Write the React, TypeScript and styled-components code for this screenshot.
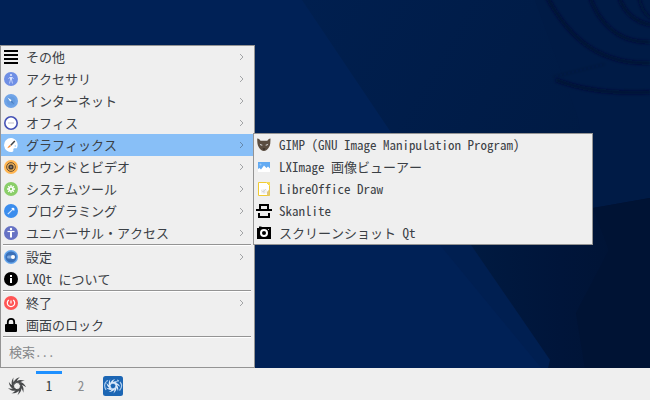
import React from 'react';
import styled, { createGlobalStyle, css } from 'styled-components';

const GlobalStyle = createGlobalStyle`
  *, *::before, *::after { box-sizing: border-box; }
  body {
    margin: 0;
    background: #002156;
    color: #3b4045;
    font: 13px/22px 'Noto Sans Mono CJK JP', 'Noto Sans CJK JP', monospace;
  }
  button, input { font: inherit; color: inherit; }
`;

const Desktop = styled.div`
  position: relative;
  display: flex;
  flex-direction: column;
  min-height: 100vh;
  overflow: hidden;
`;

const Backdrop = styled.svg`
  position: absolute;
  inset: 0;
  width: 100%;
  height: 100%;
`;

const Workspace = styled.main`
  position: relative;
  flex: 1;
  display: flex;
  align-items: flex-end;
`;

const menuFrame = css`
  background: #efefef;
  border: 1px solid #949494;
`;

const MainMenu = styled.nav`
  ${menuFrame}
  width: 255px;
`;

const MenuList = styled.ul`
  list-style: none;
  margin: 0;
  padding: 0;
`;

const Entry = styled.li`
  position: relative;
`;

const EntryButton = styled.button<{ $active?: boolean }>`
  display: flex;
  align-items: center;
  gap: 7px;
  width: 100%;
  height: 22px;
  padding: 0 10px 0 2px;
  border: 0;
  background: ${p => (p.$active ? '#88bff7' : 'transparent')};
  text-align: left;
  white-space: nowrap;
`;

const EntryLabel = styled.span`
  flex: 1;
`;

const Icon = styled.svg<{ $size?: number }>`
  flex: none;
  display: block;
  width: ${p => p.$size ?? 16}px;
  height: ${p => p.$size ?? 16}px;
`;

const Arrow = styled.svg`
  flex: none;
  width: 5px;
  height: 8px;
  fill: none;
  stroke: #31363b;
  stroke-opacity: 0.4;
`;

const Submenu = styled.ul`
  ${menuFrame}
  position: absolute;
  top: -1px;
  left: calc(100% - 1px);
  z-index: 1;
  min-width: 340px;
  margin: 0;
  padding: 0;
  list-style: none;
`;

const Separator = styled.li`
  height: 2px;
  margin: 0 3px 0 2px;
  border-top: 1px solid #949494;
  border-bottom: 1px solid #ffffff;
`;

const SearchBox = styled.input`
  display: block;
  width: 100%;
  height: 29px;
  padding: 0 8px 2px;
  border: 0;
  outline: 0;
  background: transparent;
  &::placeholder { color: #858789; opacity: 1; }
`;

const Taskbar = styled.footer`
  position: relative;
  display: flex;
  align-items: center;
  gap: 6px;
  height: 32px;
  padding-left: 4px;
  background: #efefef;
`;

const PanelButton = styled.button<{ $current?: boolean; $dim?: boolean }>`
  display: flex;
  align-items: center;
  justify-content: center;
  width: 26px;
  height: 26px;
  padding: 0;
  border: 0;
  background: transparent;
  color: ${p => (p.$dim ? '#8a8c8e' : '#31363b')};
  box-shadow: ${p => (p.$current ? 'inset 0 3px #1e90ff' : 'none')};
`;

const Pager = styled.div`
  display: flex;
  gap: 6px;
  line-height: 26px;
  ${PanelButton} { padding-top: 3px; }
`;

const IconButton = styled(PanelButton)`
  padding-top: 4px;
`;

const glyphs = {
  other: <path d="M1 2h14M1 6h14M1 10h14M1 14h14" stroke="#000" strokeWidth="2" />,
  accessories: (
    <>
      <circle cx="8" cy="8" r="7" fill="#6f8fe5" />
      <circle cx="8" cy="4" r="1.1" fill="#dbe4ff" />
      <path d="M7 6h2v3H7z" fill="#dbe4ff" />
      <path d="M5.5 8 7 6M10.5 8 9 6M6.5 12.5l1-4M9.5 12.5l-1-4" fill="none" stroke="#c3d1fa" />
    </>
  ),
  internet: (
    <>
      <circle cx="8" cy="8" r="7" fill="#70a4e8" />
      <circle cx="8" cy="8" r="4.5" fill="#669ce0" />
      <path d="m4.5 4.5 4.3 2.8-1.5 1.5z" fill="#fff" />
      <path d="M11.5 11.5 7.3 8.8l1.5-1.5z" fill="#4c80c4" />
    </>
  ),
  office: (
    <>
      <circle cx="8" cy="8" r="6.2" fill="#fff" stroke="#4552b5" strokeWidth="1.6" />
      <path d="M5 8h6" stroke="#dedee3" strokeWidth="2" />
    </>
  ),
  graphics: (
    <>
      <path
        d="M8 1a7 7 0 1 0 1.5 13.85c1.3-.35.7-1.9.9-2.9.3-1.4 1.8-.5 3.5-.8A7 7 0 0 0 8 1z"
        fill="#fff"
      />
      <path d="M7.8 8.2 11.8 4" stroke="#404448" strokeWidth="1.5" />
      <path d="m4.3 11.3 1.6-2.6 1.2-.8.9.9-.9 1.2z" fill="#f48b35" />
      <circle cx="12.3" cy="9" r=".8" fill="#8ecbff" />
    </>
  ),
  sound: (
    <>
      <circle cx="8" cy="8" r="7" fill="#ffb550" />
      <circle cx="8" cy="8" r="4.4" fill="#e9ad57" stroke="#6c5336" />
      <circle cx="8" cy="8" r="2.6" fill="#423b35" />
      <circle cx="8" cy="8" r="1.1" fill="#8d8073" />
    </>
  ),
  system: (
    <>
      <circle cx="8" cy="8" r="7" fill="#8ace69" />
      <path d="M8 4v8M4 8h8M5.2 5.2l5.6 5.6M10.8 5.2l-5.6 5.6" stroke="#fff" strokeWidth="1.3" />
      <circle cx="8" cy="8" r="2.5" fill="#fff" />
      <circle cx="8" cy="8" r="1.2" fill="#8ace69" />
    </>
  ),
  development: (
    <>
      <circle cx="8" cy="8" r="7" fill="#3b8ded" />
      <path d="m4.8 11.2 5.4-5.4" stroke="#d6e8ff" strokeWidth="1.2" />
      <path d="m8.2 5 2.3-.3 1 1-.3 2.3-1.2-1z" fill="#fff" />
    </>
  ),
  access: (
    <>
      <circle cx="8" cy="8" r="7" fill="#6672c4" />
      <circle cx="8" cy="4" r="1.2" fill="#fff" />
      <path d="M4.5 6.5h7" stroke="#fff" strokeWidth="1.2" />
      <path d="M8 6v6.5" stroke="#fff" strokeWidth="2" />
    </>
  ),
  settings: (
    <>
      <circle cx="8" cy="8" r="7" fill="#65a6ed" />
      <circle cx="8" cy="8" r="5.6" fill="#3a70b8" />
      <rect x="4" y="6.5" width="7" height="3" rx="1.5" fill="#7ea9de" />
      <circle cx="10" cy="8" r="2" fill="#fff" />
    </>
  ),
  about: (
    <>
      <circle cx="8" cy="8" r="7" />
      <path d="M7 4h2v2H7zM7 7h2v5H7z" fill="#fff" />
    </>
  ),
  leave: (
    <>
      <circle cx="8" cy="8" r="7" fill="#ff5555" />
      <path d="M5.8 5a3.7 3.7 0 1 0 4.4 0M8 5.5v3" fill="none" stroke="#fff" strokeWidth="1.2" />
    </>
  ),
  lock: (
    <>
      <rect x="2" y="7" width="12" height="8" rx="1" />
      <path d="M4.8 8V5a3.2 3.2 0 0 1 6.4 0v3" fill="none" stroke="#000" strokeWidth="1.8" />
    </>
  ),
  gimp: (
    <>
      <path
        d="M1.2 1.5c1.8.3 2.7 1.3 3.3 2.2h6.8c.7-1 1.7-2 3.2-2.2-.2 3.8.1 6.3-1.5 8.8-1.3 2-3.2 3.8-5.1 3.8S4 12.3 2.8 10.3C1.2 7.7 1.3 5 1.2 1.5z"
        fill="#5a4d40"
      />
      <path d="m3.7 6.8 3 1.2c-.8 1-2.5.7-3-1.2zM12.3 6.8l-3 1.2c.8 1 2.5.7 3-1.2z" fill="#ddd" />
      <path d="M6.5 11.5h3L8 13z" fill="#29231f" />
    </>
  ),
  image: (
    <>
      <path d="M2 3h12v10H2z" fill="#fff" />
      <path d="M2 3h12v6.5l-2-2-1.5 1.5L8 6.5l-3 4L3.5 9 2 10z" fill="#62aaf2" />
      <circle cx="4.5" cy="5.5" r="1" fill="#9ccaf9" />
    </>
  ),
  draw: (
    <>
      <path d="M2.5 1.5h8l3 3v10h-11z" fill="#fff" stroke="#f1cb32" />
      <path d="M10 1h4v4z" fill="#f7dc57" />
      <path d="M11 14.500V11l2.5-3v6.5z" fill="#dfc67b" />
      <path d="M5 8.5h6v4H5z" fill="#f2f2f2" />
      <path d="m5.5 9.5 1.5 1.5 3-3M8 8.5v4" fill="none" stroke="#d0d0d0" strokeWidth=".8" />
    </>
  ),
  scanner: <path d="M4 7V2h8v5M0 7h16M3 10v4h10v-4" fill="none" stroke="#000" strokeWidth="2" />,
  camera: (
    <>
      <path d="M1 3h2V1.5h2.500V2H15v12H1z" />
      <circle cx="8" cy="8" r="3" fill="none" stroke="#fff" strokeWidth="2" />
      <path d="M12 4h1v1h-1z" fill="#ccc" />
    </>
  ),
};

type GlyphName = keyof typeof glyphs;

interface Item {
  icon: GlyphName;
  label: string;
  leaf?: boolean;
  children?: Item[];
}

const groups: Item[][] = [
  [
    { icon: 'other', label: 'その他' },
    { icon: 'accessories', label: 'アクセサリ' },
    { icon: 'internet', label: 'インターネット' },
    { icon: 'office', label: 'オフィス' },
    {
      icon: 'graphics',
      label: 'グラフィックス',
      children: [
        { icon: 'gimp', label: 'GIMP (GNU Image Manipulation Program)', leaf: true },
        { icon: 'image', label: 'LXImage 画像ビューアー', leaf: true },
        { icon: 'draw', label: 'LibreOffice Draw', leaf: true },
        { icon: 'scanner', label: 'Skanlite', leaf: true },
        { icon: 'camera', label: 'スクリーンショット Qt', leaf: true },
      ],
    },
    { icon: 'sound', label: 'サウンドとビデオ' },
    { icon: 'system', label: 'システムツール' },
    { icon: 'development', label: 'プログラミング' },
    { icon: 'access', label: 'ユニバーサル・アクセス' },
  ],
  [
    { icon: 'settings', label: '設定' },
    { icon: 'about', label: 'LXQt について', leaf: true },
  ],
  [
    { icon: 'leave', label: '終了' },
    { icon: 'lock', label: '画面のロック', leaf: true },
  ],
];

function MenuEntry({ item }: { item: Item }) {
  return (
    <Entry>
      <EntryButton type="button" $active={!!item.children} aria-haspopup={item.leaf ? undefined : 'menu'}>
        <Icon viewBox="0 0 16 16" aria-hidden="true">{glyphs[item.icon]}</Icon>
        <EntryLabel>{item.label}</EntryLabel>
        {!item.leaf && (
          <Arrow viewBox="0 0 5 8" aria-hidden="true">
            <path d="M1 1l3 3-3 3" />
          </Arrow>
        )}
      </EntryButton>
      {item.children && (
        <Submenu>
          {item.children.map(child => <MenuEntry key={child.label} item={child} />)}
        </Submenu>
      )}
    </Entry>
  );
}

const blades = [0, 40, 80, 120, 160, 200, 240, 280, 320];

function Swirl({ color }: { color: string }) {
  return (
    <g fill={color}>
      {blades.map(angle => (
        <path
          key={angle}
          transform={`rotate(${angle} 10 10)`}
          d="M6.600 9.500C5.800 6 8 2.500 12.800 1.200 10.800 2.800 10 4.300 9.900 5.800 8.500 6.300 7.500 7.500 7.400 9.200z"
        />
      ))}
    </g>
  );
}

function Wallpaper() {
  return (
    <Backdrop viewBox="0 0 650 400" preserveAspectRatio="xMaxYMin slice" aria-hidden="true">
      <defs>
        <linearGradient id="band" x1="0" y1="0" x2="1" y2="0.4">
          <stop offset="0" stopColor="#001f4f" />
          <stop offset="1" stopColor="#001a43" />
        </linearGradient>
        <linearGradient id="corner" x1="0" y1="0" x2="1" y2="0">
          <stop offset="0" stopColor="#001a41" />
          <stop offset="0.5" stopColor="#00153a" />
          <stop offset="1" stopColor="#001333" />
        </linearGradient>
        <filter id="soft" x="-10%" y="-10%" width="120%" height="120%">
          <feGaussianBlur stdDeviation="1.5" />
        </filter>
      </defs>
      <path d="M0 0h650v400H0z" fill="#002156" />
      <path d="M302 0h348v245H471L392 134z" fill="url(#band)" />
      <path d="M440 245h31l79 115-5 40h10L543 370z" fill="#001f51" />
      <path d="M535 0h115v198l-57 10-15-90z" fill="#001b46" />
      <path d="M471 245l122-37 57-10v202H540l10-40z" fill="url(#corner)" />
      <path d="M593 208l57-10v202h-60l-14-87 33-63z" fill="#001334" />
      <g fill="none" stroke="#001132" filter="url(#soft)">
        <path d="M547-3C563 27 591 65 650 63" strokeWidth="3" />
        <path d="M590-3C598 21 617 43 650 42" strokeWidth="3" />
        <path d="M619-3C624 12 635 22 651 25" strokeWidth="3" />
        <path d="M639-3C641 9 645 15 652 19" strokeWidth="2" />
        <path d="M556 80C585 91 617 94 651 92" strokeWidth="3" />
        <path d="M553 77 605 64" strokeWidth="1" strokeOpacity="0.3" />
      </g>
    </Backdrop>
  );
}

export default function App() {
  return (
    <Desktop>
      <GlobalStyle />
      <Wallpaper />
      <Workspace>
        <MainMenu aria-label="アプリケーション">
          <MenuList>
            {groups.map((group, i) => (
              <React.Fragment key={i}>
                {group.map(item => <MenuEntry key={item.label} item={item} />)}
                <Separator role="separator" />
              </React.Fragment>
            ))}
          </MenuList>
          <SearchBox type="text" placeholder="検索..." aria-label="検索" />
        </MainMenu>
      </Workspace>
      <Taskbar>
        <IconButton type="button" aria-label="メニュー">
          <Icon $size={20} viewBox="0 0 20 20"><Swirl color="#47494b" /></Icon>
        </IconButton>
        <Pager>
          <PanelButton type="button" $current>1</PanelButton>
          <PanelButton type="button" $dim>2</PanelButton>
        </Pager>
        <IconButton type="button" aria-label="LXQt">
          <Icon $size={20} viewBox="0 0 20 20">
            <rect width="20" height="20" rx="2.5" fill="#1c66b4" />
            <g transform="translate(2 2) scale(.8)"><Swirl color="#dceafa" /></g>
            <path
              d="M3 6C.8 8.500 1.300 11 3 14M17 6c2.200 2.500 1.700 6-.5 8.500M3 5.500l2-1M14 4l2 1"
              fill="none"
              stroke="#a9cbee"
              strokeWidth="1.2"
            />
          </Icon>
        </IconButton>
      </Taskbar>
    </Desktop>
  );
}
